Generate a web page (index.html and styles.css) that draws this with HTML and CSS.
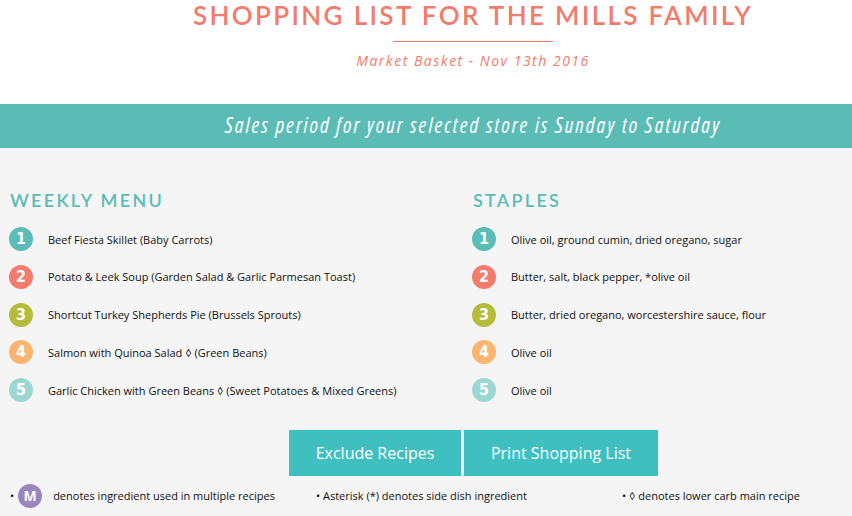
FILE: index.html
```html
<!DOCTYPE html>
<html lang="en">
<head>
    <meta charset="UTF-8">
    <meta name="viewport" content="width=device-width, initial-scale=1.0">
    <title>Shopping List for the Mills Family</title>
    <link rel="stylesheet" href="styles.css">
</head>
<body>
    <header class="top">
        <h1>Shopping List for the Mills Family</h1>
        <div class="rule"></div>
        <p class="store">Market Basket - Nov 13th 2016</p>
    </header>

    <div class="banner">
        <p>Sales period for your selected store is Sunday to Saturday</p>
    </div>

    <main class="content">
        <div class="columns">
            <section class="col">
                <h2>Weekly Menu</h2>
                <ul class="list">
                    <li><span class="num c1">1</span>Beef Fiesta Skillet (Baby Carrots)</li>
                    <li><span class="num c2">2</span>Potato &amp; Leek Soup (Garden Salad &amp; Garlic Parmesan Toast)</li>
                    <li><span class="num c3">3</span>Shortcut Turkey Shepherds Pie (Brussels Sprouts)</li>
                    <li><span class="num c4">4</span>Salmon with Quinoa Salad ◊ (Green Beans)</li>
                    <li><span class="num c5">5</span>Garlic Chicken with Green Beans ◊ (Sweet Potatoes &amp; Mixed Greens)</li>
                </ul>
            </section>
            <section class="col">
                <h2>Staples</h2>
                <ul class="list">
                    <li><span class="num c1">1</span>Olive oil, ground cumin, dried oregano, sugar</li>
                    <li><span class="num c2">2</span>Butter, salt, black pepper, *olive oil</li>
                    <li><span class="num c3">3</span>Butter, dried oregano, worcestershire sauce, flour</li>
                    <li><span class="num c4">4</span>Olive oil</li>
                    <li><span class="num c5">5</span>Olive oil</li>
                </ul>
            </section>
        </div>

        <div class="actions">
            <button class="btn btn-exclude">Exclude Recipes</button>
            <button class="btn btn-print">Print Shopping List</button>
        </div>

        <div class="legend">
            <div class="note">&bull; <span class="m-badge">M</span> denotes ingredient used in multiple recipes</div>
            <div class="note">&bull; Asterisk (*) denotes side dish ingredient</div>
            <div class="note">&bull; ◊ denotes lower carb main recipe</div>
        </div>
    </main>
</body>
</html>
```

FILE: styles.css
```css
html, body {
    margin: 0;
    padding: 0;
}
body {
    font-family: "Open Sans", Arial, sans-serif;
    background-color: #f5f5f5;
    color: #111;
    width: 852px;
    height: 516px;
    overflow: hidden;
}
.top {
    background: #fff;
    padding: 0 0 0 94px;
    text-align: center;
    height: 104px;
}
h1 {
    margin: 0;
    font-family: Lato, sans-serif;
    font-weight: 600;
    font-size: 26px;
    line-height: 30px;
    letter-spacing: 2.35px;
    text-transform: uppercase;
    color: #f47b6b;
}
.rule {
    width: 160px;
    height: 1px;
    background: #f47b6b;
    margin: 11px auto 0;
}
.store {
    margin: 9px 0 0;
    font-style: italic;
    font-size: 14px;
    letter-spacing: 1.5px;
    color: #f47b6b;
}
.banner {
    background-color: #5bbcb6;
    height: 44px;
    padding-left: 94px;
    text-align: center;
}
.banner p {
    margin: 0;
    line-height: 43px;
    color: #fff;
    font-style: italic;
    font-size: 21px;
    font-stretch: 87.5%;
    letter-spacing: 2px;
}
.content {
    padding: 0 10px;
}
.columns {
    display: grid;
    grid-template-columns: 463px 1fr;
    padding-top: 41px;
}
h2 {
    margin: 0 0 16px;
    font-family: Lato, sans-serif;
    font-weight: 600;
    font-size: 18px;
    line-height: 22px;
    letter-spacing: 2.3px;
    text-transform: uppercase;
    color: #5bbcb6;
}
.list {
    list-style: none;
    margin: 0;
    padding: 0;
}
.list li {
    display: flex;
    align-items: center;
    height: 24px;
    margin-bottom: 13.75px;
    font-size: 11px;
}
.num {
    flex: none;
    width: 24px;
    height: 24px;
    margin: 0 15px 0 -1px;
    border-radius: 50%;
    color: #fff;
    font-family: "DejaVu Sans Condensed", "DejaVu Sans", sans-serif;
    font-stretch: condensed;
    font-weight: bold;
    font-size: 16px;
    line-height: 24px;
    text-align: center;
}
.c1 { background: #5bbdb7; }
.c2 { background: #f47c6e; }
.c3 { background: #b5bd38; }
.c4 { background: #fdb46f; }
.c5 { background: #9dd7d3; }
.actions {
    display: flex;
    justify-content: center;
    gap: 3px;
    padding-left: 95px;
    margin-top: 14px;
}
.btn {
    height: 46px;
    border: none;
    background-color: #3fbfbf;
    color: #fff;
    font-family: "Open Sans", Arial, sans-serif;
    font-size: 16px;
    cursor: pointer;
}
.btn-exclude { width: 172px; }
.btn-print { width: 194px; }
.legend {
    display: grid;
    grid-template-columns: 306px 306px 1fr;
    margin-top: 8px;
    font-size: 11px;
}
.note {
    display: flex;
    align-items: center;
    gap: 4px;
    height: 24px;
}
.m-badge {
    display: inline-block;
    width: 24px;
    height: 24px;
    margin-right: 7px;
    border-radius: 50%;
    background: #9b87c0;
    color: #fff;
    font-weight: bold;
    font-size: 14px;
    line-height: 24px;
    text-align: center;
}
```
